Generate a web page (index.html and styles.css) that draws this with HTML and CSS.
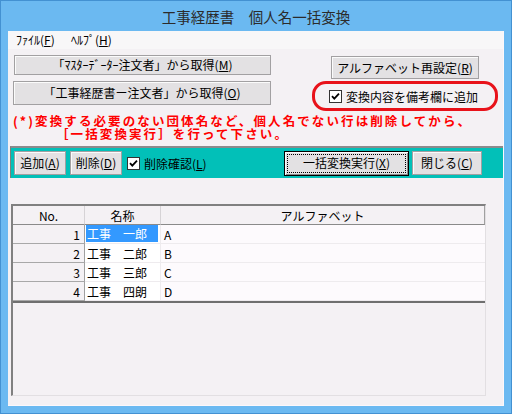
FILE: index.html
```html
<!DOCTYPE html>
<html lang="ja">
<head>
<meta charset="utf-8">
<link rel="stylesheet" href="styles.css">
</head>
<body>
<div class="window">
  <div class="titlebar">工事経歴書　個人名一括変換</div>
  <div class="client">
    <div class="menubar">
      <span class="menu-item">ﾌｧｲﾙ(<u>F</u>)</span>
      <span class="menu-item">ﾍﾙﾌﾟ(<u>H</u>)</span>
    </div>
    <div class="top">
      <div class="left-buttons">
        <button class="btn b1">「ﾏｽﾀｰﾃﾞｰﾀｰ注文者」から取得(<u>M</u>)</button>
        <button class="btn b2">「工事経歴書ー注文者」から取得(<u>O</u>)</button>
      </div>
      <div class="right">
        <button class="btn b3">アルファベット再設定(<u>R</u>)</button>
        <div class="highlight">
          <span class="check"><svg viewBox="0 0 11 11" width="11" height="11"><path d="M2 5.2 L4.3 7.6 L9 2.6" fill="none" stroke="#000" stroke-width="1.8"/></svg></span>
          <span class="check-label">変換内容を備考欄に追加</span>
        </div>
      </div>
    </div>
    <div class="notice">
      <div class="line1">(*)変換する必要のない団体名など、個人名でない行は削除してから、</div>
      <div class="line2">［一括変換実行］を行って下さい。</div>
    </div>
    <div class="toolbar">
      <button class="btn tb small">追加(<u>A</u>)</button>
      <button class="btn tb small">削除(<u>D</u>)</button>
      <span class="check tbcheck"><svg viewBox="0 0 11 11" width="11" height="11"><path d="M2 5.2 L4.3 7.6 L9 2.6" fill="none" stroke="#000" stroke-width="1.8"/></svg></span>
      <span class="tb-label">削除確認(<u>L</u>)</span>
      <button class="btn tb default">一括変換実行(<u>X</u>)</button>
      <button class="btn tb close">閉じる(<u>C</u>)</button>
    </div>
    <div class="grid">
      <div class="rows">
        <div class="hd">No.</div>
        <div class="hd">名称</div>
        <div class="hd last">アルファベット</div>

        <div class="no">1</div>
        <div class="name"><span class="sel">工事　一郎</span></div>
        <div class="alpha">A</div>

        <div class="no">2</div>
        <div class="name">工事　二郎</div>
        <div class="alpha">B</div>

        <div class="no">3</div>
        <div class="name">工事　三郎</div>
        <div class="alpha">C</div>

        <div class="no">4</div>
        <div class="name">工事　四朗</div>
        <div class="alpha">D</div>
      </div>
    </div>
  </div>
</div>
</body>
</html>
```
FILE: styles.css
```css
* { box-sizing: border-box; margin: 0; padding: 0; }
body {
  margin: 0;
  width: 512px;
  height: 414px;
  overflow: hidden;
  background: #6bb9f1;
  font-family: "Noto Sans CJK JP", "Noto Sans", sans-serif;
  font-size: 12px;
  color: #000;
}
u { text-decoration: underline; text-underline-offset: 1px; }
.window {
  width: 512px;
  height: 414px;
  border: 1px solid #4391d2;
  background: #6bb9f1;
  display: flex;
  flex-direction: column;
  padding: 0 7px 7px;
}
.titlebar {
  height: 30px;
  flex: none;
  display: flex;
  align-items: center;
  justify-content: center;
  font-size: 14.5px;
  color: #2b2b2b;
  padding-top: 1px;
}
.client {
  flex: 1;
  background: #f4f1f4;
  display: flex;
  flex-direction: column;
  border-right: 1px solid #fbf8fb;
  border-bottom: 1px solid #fbf8fb;
}
.menubar {
  height: 18px;
  flex: none;
  background: #f8f7f8;
  display: flex;
  align-items: center;
  padding-left: 8px;
  font-size: 12px;
  line-height: 1;
}
.menu-item { width: 55px; }

.btn {
  font-family: inherit;
  font-size: 12px;
  line-height: 1;
  color: #000;
  background: #e3e1e3;
  border: 1px solid #a2a0a2;
  box-shadow: inset 1px 1px 0 #fbfbfb;
  display: flex;
  align-items: center;
  justify-content: center;
  padding: 0;
}

.top { display: flex; padding-top: 6px; flex: none; }
.left-buttons { display: flex; flex-direction: column; gap: 6px; padding-left: 5px; }
.b1 { width: 257px; height: 20px; margin-left: 1px; }
.b2 { width: 258px; height: 24px; }
.right { display: flex; flex-direction: column; margin-left: 41px; padding-top: 1px; }
.b3 { width: 148px; height: 23px; margin-left: 19px; }
.highlight {
  width: 186px;
  height: 30px;
  margin-top: 2px;
  border: 3px solid #e8121a;
  border-radius: 14px;
  display: flex;
  align-items: center;
  padding-left: 14px;
  gap: 4px;
  font-size: 12px;
}
.check {
  width: 13px;
  height: 13px;
  flex: none;
  background: #fff;
  border: 1px solid #333;
  display: flex;
  align-items: center;
  justify-content: center;
}
.check svg { display: block; }

.notice {
  margin-top: 3px;
  padding-left: 5px;
  color: #ff0000;
  font-weight: bold;
  font-size: 12.5px;
  line-height: 13px;
  letter-spacing: 2.1px;
  white-space: nowrap;
  flex: none;
}
.line2 { padding-left: 43px; }

.toolbar {
  margin-top: 6px;
  margin-left: 2px;
  height: 32px;
  flex: none;
  border-top: 2px solid #8c8a8c;
  border-left: 1px solid #7d7d7d;
  background: #02c0b8;
  display: flex;
  align-items: center;
  padding-left: 3px;
}
.tb { height: 24px; }
.small { width: 52px; margin-right: 4px; }
.tbcheck { margin-left: 1px; margin-right: 4px; }
.tb-label { font-size: 12px; }
.default {
  margin-left: auto;
  width: 125px;
  height: 25px;
  border: 1px solid #000;
  box-shadow: inset 1px 1px 0 #fbfbfb, inset -1px -1px 0 #8a8a8a;
  outline: 1px dotted #000;
  outline-offset: -4px;
}
.close { width: 70px; margin-left: 3px; margin-right: 21px; }

.grid {
  margin: 26px 0 0 3px;
  width: 475px;
  height: 192px;
  flex: none;
  border-style: solid;
  border-width: 2px 1px 1px 2px;
  border-color: #808080 #e2dfe2 #e2dfe2 #808080;
  background: #f4f1f4;
}
.rows {
  display: grid;
  grid-template-columns: 72px 76px 324px;
  grid-auto-rows: 19px;
  border-bottom: 2px solid #6f6f6f;
  font-size: 12px;
}
.rows > div { display: flex; align-items: center; white-space: nowrap; }
.hd {
  justify-content: center;
  background: #f4f1f4;
  border-right: 1px solid #d6d3d6;
  border-bottom: 1px solid #8a8a8a;
}
.hd.last { border-right: 1px solid #a0a0a0; }
.no {
  justify-content: flex-end;
  padding-right: 4px;
  background: #f4f1f4;
  border-right: 1px solid #a0a0a0;
  border-bottom: 1px solid #a8a8a8;
}
.name {
  background: #fff;
  padding-left: 2px;
  border-right: 1px solid #eeebee;
  border-bottom: 1px solid #eeebee;
}
.rows > .name:has(.sel) { padding: 0 2px 1px 1px; align-items: stretch; }
.sel {
  flex: 1;
  background: #3399ff;
  color: #fff;
  display: flex;
  align-items: center;
  padding-left: 1px;
}
.alpha {
  background: #fdfafd;
  padding-left: 3px;
  border-bottom: 1px solid #eeebee;
}
```
